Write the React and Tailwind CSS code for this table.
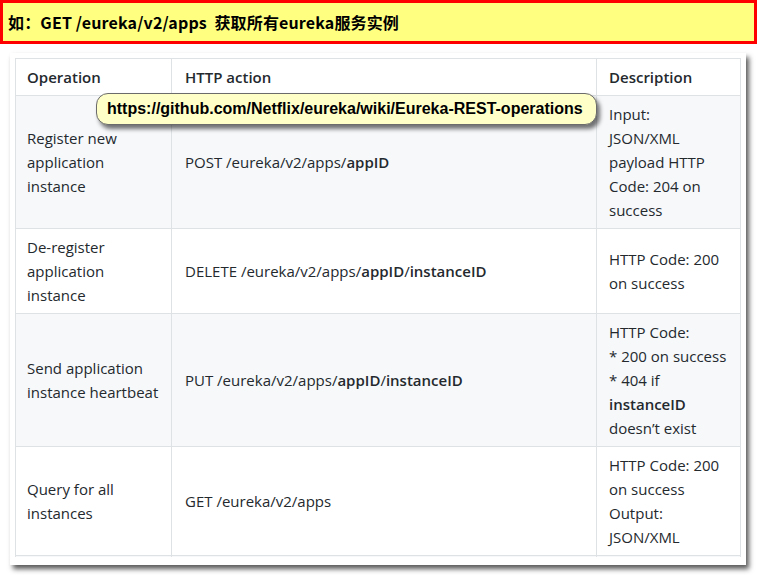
import React from 'react';

const rows = [
  {
    op: ['Register new', 'application', 'instance'],
    action: (
      <>
        POST /eureka/v2/apps/<b className="font-semibold">appID</b>
      </>
    ),
    desc: ['Input:', 'JSON/XML', 'payload HTTP', 'Code: 204 on', 'success'],
    gray: true,
  },
  {
    op: ['De-register', 'application', 'instance'],
    action: (
      <>
        DELETE /eureka/v2/apps/<b className="font-semibold">appID</b>/<b className="font-semibold">instanceID</b>
      </>
    ),
    desc: ['HTTP Code: 200', 'on success'],
  },
  {
    op: ['Send application', 'instance heartbeat'],
    action: (
      <>
        PUT /eureka/v2/apps/<b className="font-semibold">appID</b>/<b className="font-semibold">instanceID</b>
      </>
    ),
    desc: [
      'HTTP Code:',
      '* 200 on success',
      '* 404 if',
      <b key="b" className="font-semibold">instanceID</b>,
      'doesn’t exist',
    ],
    gray: true,
  },
  {
    op: ['Query for all', 'instances'],
    action: <>GET /eureka/v2/apps</>,
    desc: ['HTTP Code: 200', 'on success', 'Output:', 'JSON/XML'],
  },
];

function Lines({ items }) {
  return items.map((t, i) => (
    <div key={i} className="whitespace-nowrap">
      {t}
    </div>
  ));
}

export default function App() {
  return (
    <div className="w-[757px] h-[575px] bg-white overflow-hidden">
      {/* banner */}
      <div className="h-[44px] border-[3px] border-[#ff0000] bg-[#ffff80] flex items-center px-[5px]">
        <span
          className="text-[16px] font-bold text-black tracking-[0.15px]"
          style={{ fontFamily: '"Noto Sans CJK SC", "Noto Sans", sans-serif' }}
        >
          如：GET /eureka/v2/apps&nbsp;&nbsp;获取所有eureka服务实例
        </span>
      </div>

      {/* panel */}
      <div className="relative ml-[10px] mt-[9px] w-[736px] h-[512px] bg-white p-[5px] shadow-[3px_4px_5px_rgba(0,0,0,0.65)]">
        <div className="h-[499px] overflow-hidden">
          <table
            className="border-collapse text-[15px] leading-[24px] text-[#24292e] table-fixed w-[725px]"
            style={{ fontFamily: '"Open Sans", "Noto Sans", sans-serif' }}
          >
            <colgroup>
              <col className="w-[156px]" />
              <col className="w-[425px]" />
              <col className="w-[144px]" />
            </colgroup>
            <thead>
              <tr className="bg-white">
                <th className="border border-[#dfe2e5] px-[11px] py-[6px] text-left font-semibold">Operation</th>
                <th className="border border-[#dfe2e5] px-[13px] py-[6px] text-left font-semibold">HTTP action</th>
                <th className="border border-[#dfe2e5] px-[12px] py-[6px] text-left font-semibold">Description</th>
              </tr>
            </thead>
            <tbody>
              {rows.map((r, i) => (
                <tr key={i} className={r.gray ? 'bg-[#f6f8fa]' : 'bg-white'}>
                  <td className="border border-[#dfe2e5] px-[11px] py-[6px] align-middle">
                    <Lines items={r.op} />
                  </td>
                  <td className="border border-[#dfe2e5] px-[13px] py-[6px] align-middle whitespace-nowrap">
                    {r.action}
                  </td>
                  <td className="border border-[#dfe2e5] px-[12px] py-[6px] align-middle">
                    <Lines items={r.desc} />
                  </td>
                </tr>
              ))}
              <tr className="bg-[#f6f8fa]">
                <td className="border border-[#dfe2e5] px-[11px] py-[6px]">&nbsp;</td>
                <td className="border border-[#dfe2e5] px-[13px] py-[6px]">&nbsp;</td>
                <td className="border border-[#dfe2e5] px-[12px] py-[6px]">&nbsp;</td>
              </tr>
            </tbody>
          </table>
        </div>

        {/* tooltip */}
        <div
          className="absolute left-[86px] top-[40px] w-[501px] h-[32px] rounded-[12px] border border-[#6b6b6b] bg-[#ffffc8] shadow-[3px_4px_4px_rgba(0,0,0,0.55)] flex items-center pl-[10px] text-[16px] font-bold text-black"
          style={{ fontFamily: '"Liberation Sans", Arial, sans-serif' }}
        >
          https://github.com/Netflix/eureka/wiki/Eureka-REST-operations
        </div>
      </div>
    </div>
  );
}
